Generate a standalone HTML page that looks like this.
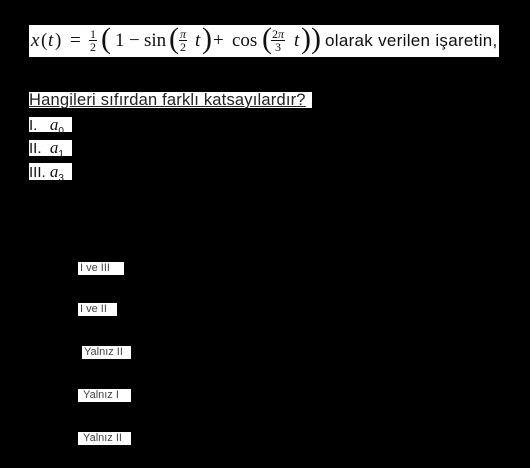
<!DOCTYPE html>
<html><head><meta charset="utf-8"><style>
body{margin:0;width:530px;height:468px;background:#000;position:relative;overflow:hidden;font-family:"Liberation Sans",sans-serif}
.b{position:absolute;background:#fff;color:#111;white-space:nowrap}
.p{position:absolute;top:0;line-height:32px;font-family:"Liberation Serif",serif;font-size:19px}
.i{font-style:italic}
.fr{position:absolute;top:3px;text-align:center;font-size:12px;line-height:12px;font-family:"Liberation Serif",serif}
.fr span{display:block;padding:0 1px}
.fr .n{border-bottom:1px solid #111}
.big{font-size:30px;font-weight:100}
.a{position:absolute;background:#fff;color:#444;font-size:11px;line-height:13px;height:13px;padding:0 2px;white-space:nowrap}
</style></head><body>
<div class="b" style="left:29px;top:25px;width:470px;height:32px">
<span class="p i" style="left:2px">x</span><span class="p" style="left:12px">(</span><span class="p i" style="left:19px">t</span><span class="p" style="left:26px">)</span><span class="p" style="left:41px">=</span>
<span class="fr" style="left:60px"><span class="n">1</span><span>2</span></span>
<span class="p big" style="left:72px;top:-2px">(</span><span class="p" style="left:86px">1</span><span class="p" style="left:100px">−</span><span class="p" style="left:115px">sin</span>
<span class="p big" style="left:140px;top:-2px">(</span><span class="fr" style="left:150px"><span class="n i">π</span><span>2</span></span><span class="p i" style="left:166px">t</span><span class="p big" style="left:173px;top:-2px">)</span>
<span class="p" style="left:184px">+</span><span class="p" style="left:203px">cos</span>
<span class="p big" style="left:233px;top:-2px">(</span><span class="fr" style="left:242px"><span class="n">2<i>π</i></span><span>3</span></span><span class="p i" style="left:265px">t</span><span class="p big" style="left:272px;top:-2px">))</span>
<span class="p" style="left:296px;font-family:'Liberation Sans',sans-serif;font-size:17px;letter-spacing:0.3px">olarak verilen işaretin,</span>
</div>
<div class="b" style="left:29px;top:92px;width:283px;height:16px;font-size:16.5px;line-height:16px;text-decoration:underline;color:#222;letter-spacing:0.2px">Hangileri sıfırdan farklı katsayılardır?</div>
<div class="b" style="left:29px;top:117px;width:43px;height:15px;font-size:15px;line-height:15px">I.&nbsp;&nbsp; <i style="font-family:'Liberation Serif';font-size:17px">a</i><sub style="font-size:10px">0</sub></div>
<div class="b" style="left:29px;top:140px;width:43px;height:16px;font-size:15px;line-height:16px">II.&nbsp; <i style="font-family:'Liberation Serif';font-size:17px">a</i><sub style="font-size:10px">1</sub></div>
<div class="b" style="left:29px;top:163px;width:43px;height:17px;font-size:15px;line-height:17px">III. <i style="font-family:'Liberation Serif';font-size:17px">a</i><sub style="font-size:10px">3</sub></div>
<div class="a" style="left:78px;top:262px;width:42px">I ve III</div>
<div class="a" style="left:78px;top:303px;width:35px">I ve II</div>
<div class="a" style="left:82px;top:346px;width:45px">Yalnız II</div>
<div class="a" style="left:78px;top:389px;width:49px">&nbsp;Yalnız I</div>
<div class="a" style="left:78px;top:432px;width:49px">&nbsp;Yalnız II</div>
</body></html>
